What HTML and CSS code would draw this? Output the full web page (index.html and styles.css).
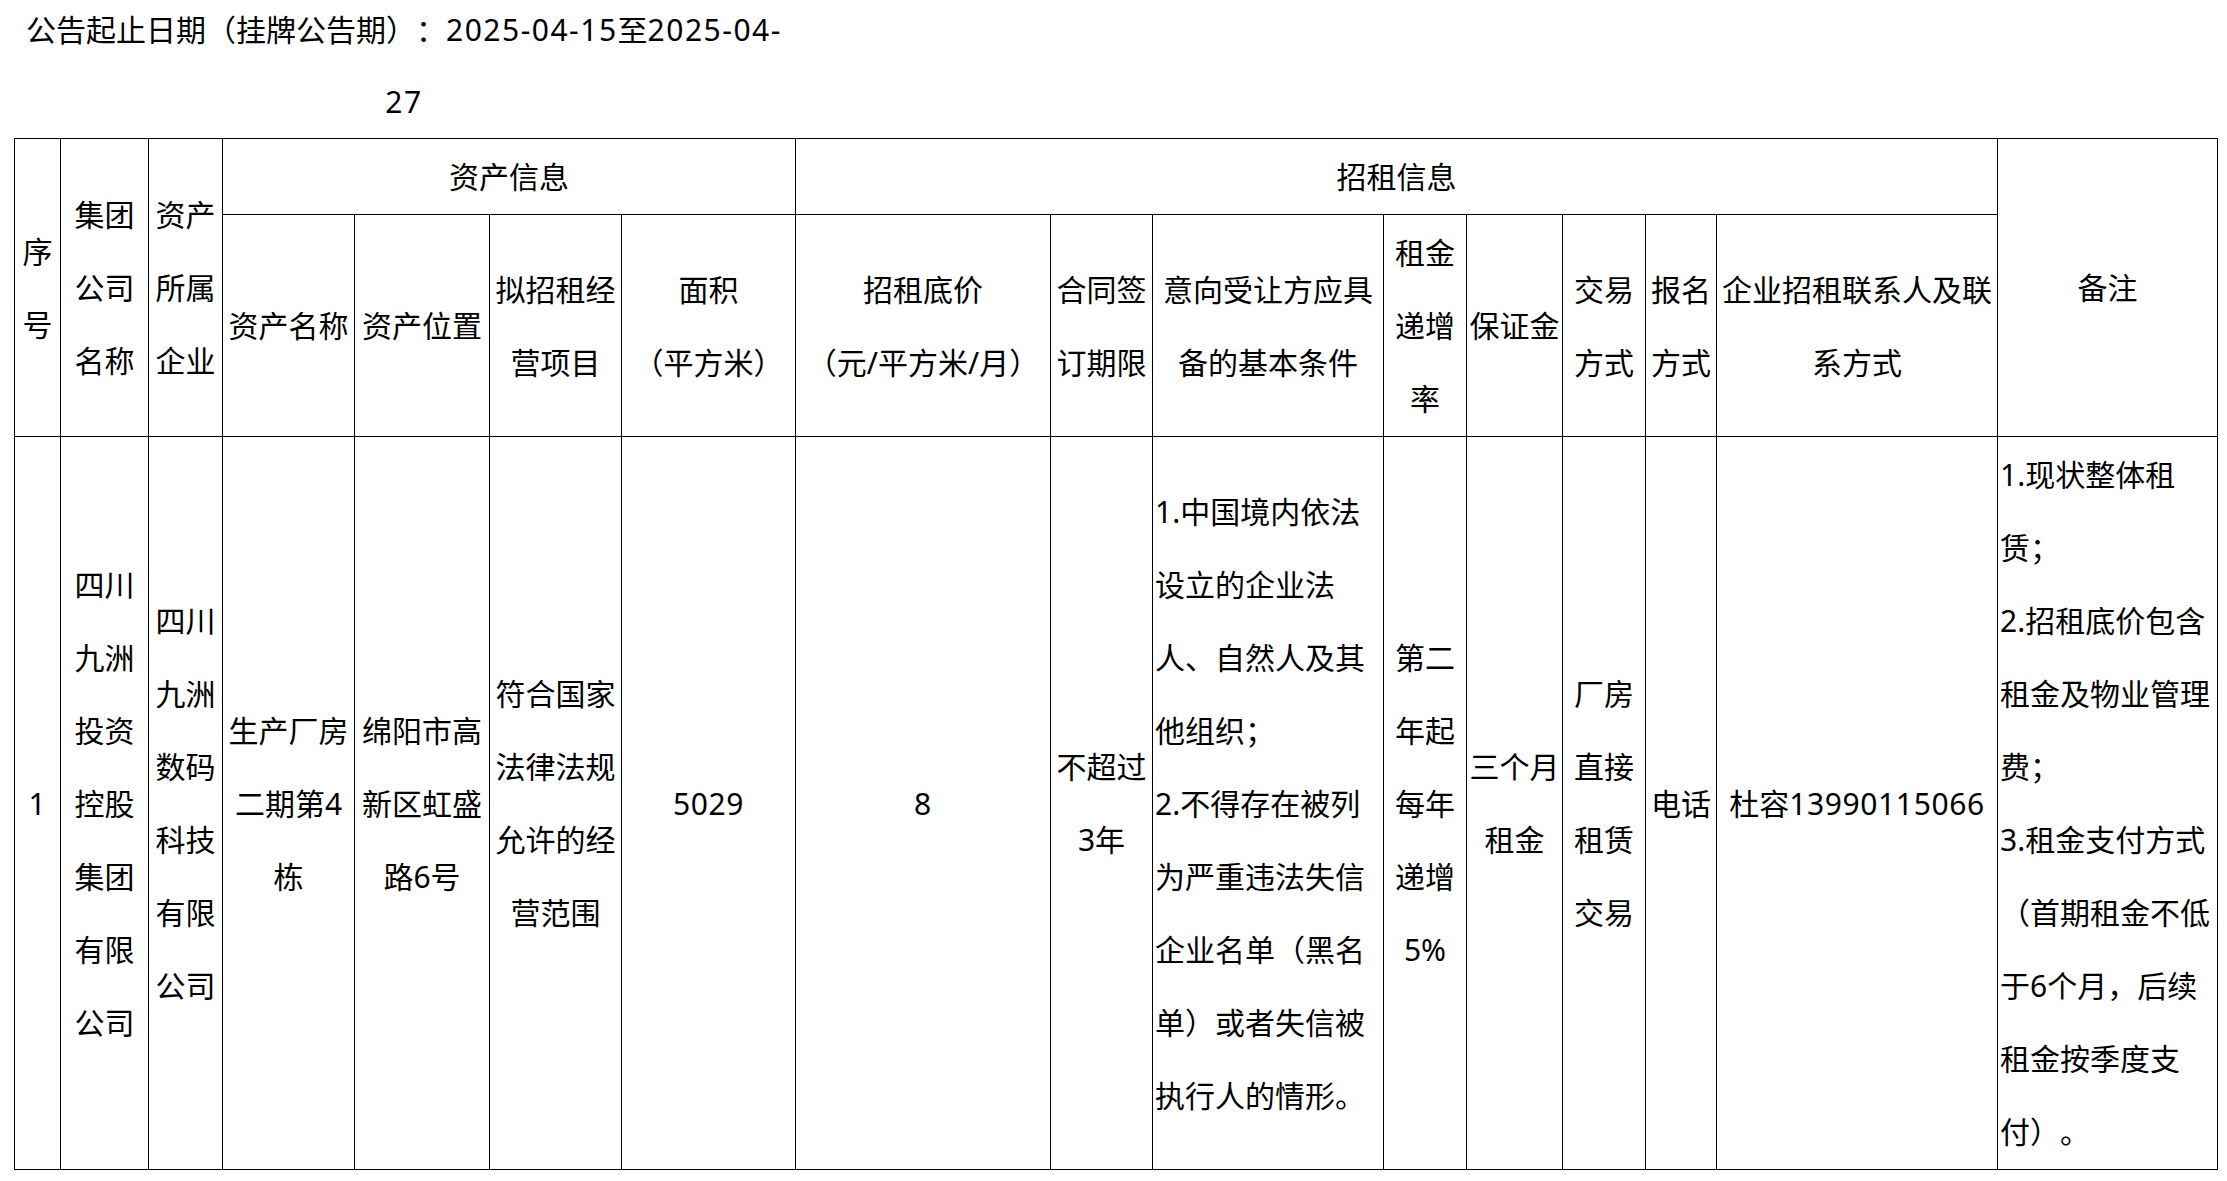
FILE: index.html
```html
<!DOCTYPE html>
<html lang="zh-CN">
<head>
<meta charset="utf-8">
<title>招租公告</title>
<link rel="stylesheet" href="styles.css">
</head>
<body>
<div class="notice"><span class="notice-text">公告起止日期（挂牌公告期）：<span class="num">2025-04-15</span>至<span class="num">2025-04-</span><br><span class="num">27</span></span></div>
<table class="grid">
  <colgroup>
    <col class="c1"><col class="c2"><col class="c3"><col class="c4"><col class="c5"><col class="c6"><col class="c7"><col class="c8">
    <col class="c9"><col class="c10"><col class="c11"><col class="c12"><col class="c13"><col class="c14"><col class="c15"><col class="c16">
  </colgroup>
  <thead>
    <tr>
      <th rowspan="2">序号</th>
      <th rowspan="2">集团公司名称</th>
      <th rowspan="2">资产所属企业</th>
      <th colspan="4">资产信息</th>
      <th colspan="8">招租信息</th>
      <th rowspan="2">备注</th>
    </tr>
    <tr>
      <th>资产名称</th>
      <th>资产位置</th>
      <th>拟招租经营项目</th>
      <th>面积<br><span class="halt">（</span>平方米<span class="halt">）</span></th>
      <th>招租底价<br><span class="halt">（</span>元/平方米/月<span class="halt">）</span></th>
      <th>合同签订期限</th>
      <th>意向受让方应具备的基本条件</th>
      <th>租金递增率</th>
      <th>保证金</th>
      <th>交易方式</th>
      <th>报名方式</th>
      <th>企业招租联系人及联系方式</th>
    </tr>
  </thead>
  <tbody>
    <tr>
      <td><span class="num">1</span></td>
      <td>四川九洲投资控股集团有限公司</td>
      <td>四川九洲数码科技有限公司</td>
      <td>生产厂房二期第4栋</td>
      <td>绵阳市高新区虹盛路6号</td>
      <td>符合国家法律法规允许的经营范围</td>
      <td><span class="num">5029</span></td>
      <td><span class="num">8</span></td>
      <td>不超过3年</td>
      <td class="left">1.中国境内依法设立的企业法人、自然人及其他组织；<br>2.不得存在被列为严重违法失信企业名单（黑名单）或者失信被执行人的情形。</td>
      <td>第二年起每年递增5%</td>
      <td>三个月租金</td>
      <td>厂房直接租赁交易</td>
      <td>电话</td>
      <td>杜容<span class="num">13990115066</span></td>
      <td class="left">1.现状整体租赁；<br>2.招租底价包含租金及物业管理费；<br>3.租金支付方式（首期租金不低于6个月，后续租金按季度支付）。</td>
    </tr>
  </tbody>
</table>
</body>
</html>
```

FILE: styles.css
```css
html, body {
  margin: 0;
  padding: 0;
  background: #fff;
}

body {
  font-family: "Noto Sans", "Noto Sans CJK SC", sans-serif;
  font-size: 30px;
  line-height: 73px;
  color: #000;
  text-spacing-trim: space-all;
}

.num {
  letter-spacing: 0.6px;
}

.notice {
  margin-top: -6px;
  padding-left: 26px;
}

.notice-text {
  display: inline-block;
  text-align: center;
  line-height: 72px;
}

.notice-text .num {
  letter-spacing: 1.5px;
}

.grid {
  margin-left: 14px;
  border-collapse: collapse;
  table-layout: fixed;
  width: 2204px;
}

.grid th,
.grid td {
  border: 1px solid #000;
  padding: 1px 2px;
  text-align: center;
  vertical-align: middle;
  font-weight: normal;
  line-height: 73px;
}

.grid td.left {
  text-align: left;
}

.halt {
  font-feature-settings: "halt";
}

.c1 { width: 46px; }
.c2 { width: 88px; }
.c3 { width: 74px; }
.c4 { width: 132px; }
.c5 { width: 135px; }
.c6 { width: 132px; }
.c7 { width: 174px; }
.c8 { width: 255px; }
.c9 { width: 102px; }
.c10 { width: 231px; }
.c11 { width: 83px; }
.c12 { width: 96px; }
.c13 { width: 83px; }
.c14 { width: 71px; }
.c15 { width: 281px; }
.c16 { width: 220px; }
```
